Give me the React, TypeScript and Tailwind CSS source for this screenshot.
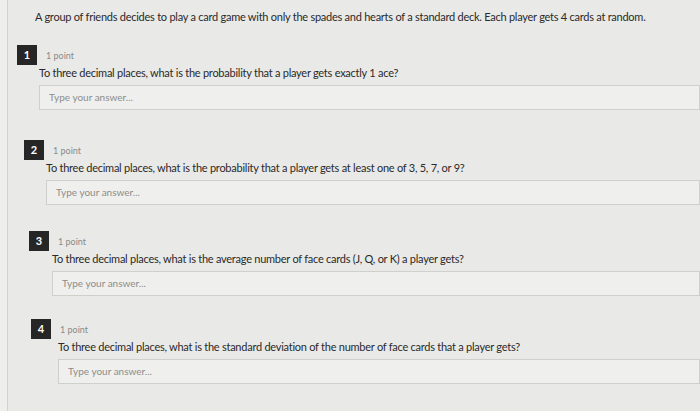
import React from "react";

const QUESTIONS = [
  {
    n: 1,
    text: "To three decimal places, what is the probability that a player gets exactly 1 ace?",
    shift: "ml-[9px]",
    gap: "mt-[21px]",
    indent: "ml-[22px]",
  },
  {
    n: 2,
    text: "To three decimal places, what is the probability that a player gets at least one of 3, 5, 7, or 9?",
    shift: "ml-[16px]",
    gap: "mt-[30px]",
    indent: "ml-[22px]",
  },
  {
    n: 3,
    text: "To three decimal places, what is the average number of face cards (J, Q, or K) a player gets?",
    shift: "ml-[21px]",
    gap: "mt-[26px]",
    indent: "ml-[23px]",
  },
  {
    n: 4,
    text: "To three decimal places, what is the standard deviation of the number of face cards that a player gets?",
    shift: "ml-[23px]",
    gap: "mt-[23px]",
    indent: "ml-[27px]",
  },
];

function Question({
  n,
  text,
  shift,
  gap,
  indent,
}: {
  n: number;
  text: string;
  shift: string;
  gap: string;
  indent: string;
}) {
  return (
    <section className={`${shift} ${gap} flex flex-col`}>
      <div className="flex items-center h-[20px]">
        <span className="w-[20px] h-[20px] bg-[#262626] text-white text-[11px] font-bold flex items-center justify-center">
          {n}
        </span>
        <span className="ml-[9px] mt-[2px] text-[9px] text-[#8a8a8a]">
          1 point
        </span>
      </div>
      <p className={`${indent} mt-[1px] text-[11px] leading-[14px] text-[#2a2a2a] tracking-[-0.25px]`}>
        {text}
      </p>
      <div className={`${indent} mt-[5px] h-[25px] bg-[#efefed] border border-[#cfcfcc] flex items-center pl-[9px]`}>
        <span className="text-[10px] text-[#8d8d8b]">Type your answer...</span>
      </div>
    </section>
  );
}

export default function App() {
  return (
    <div
      className="w-[700px] h-[411px] overflow-hidden flex bg-[#e9e9e7]"
      style={{ fontFamily: "Lato, 'Open Sans', sans-serif" }}
    >
      <div className="w-[8px] shrink-0 bg-[#eeeeec] border-r border-[#d2d2d0]" />
      <main className="flex-1 flex flex-col">
        <p className="ml-[27px] mt-[10px] text-[11px] leading-[14px] text-[#2a2a2a] tracking-[-0.25px]">
          A group of friends decides to play a card game with only the spades and hearts of a standard deck. Each player gets 4 cards at random.
        </p>
        {QUESTIONS.map((q) => (
          <Question key={q.n} {...q} />
        ))}
      </main>
    </div>
  );
}
